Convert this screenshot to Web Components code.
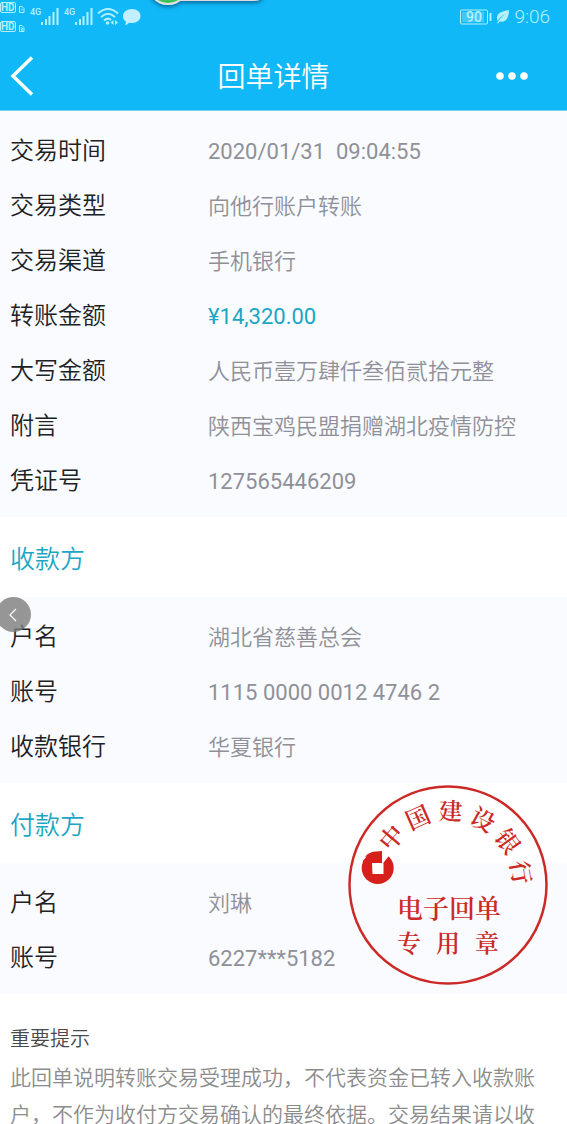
<!DOCTYPE html>
<html lang="zh-CN">
<head>
<meta charset="utf-8">
<meta name="viewport" content="width=device-width, initial-scale=1">
<title>回单详情</title>
<style>
  body {
    margin: 0;
    background: #fff;
    font-family: Roboto, "Noto Sans CJK SC", sans-serif;
    font-weight: 350;
  }
</style>
</head>
<body>
<receipt-page>
  <status-bar slot="header" time="9:06" battery="90"></status-bar>
  <nav-bar slot="header">回单详情</nav-bar>

  <receipt-panel>
    <receipt-row label="交易时间" numeric>2020/01/31  09:04:55</receipt-row>
    <receipt-row label="交易类型">向他行账户转账</receipt-row>
    <receipt-row label="交易渠道">手机银行</receipt-row>
    <receipt-row label="转账金额" numeric accent>¥14,320.00</receipt-row>
    <receipt-row label="大写金额">人民币壹万肆仟叁佰贰拾元整</receipt-row>
    <receipt-row label="附言">陕西宝鸡民盟捐赠湖北疫情防控</receipt-row>
    <receipt-row label="凭证号" numeric>127565446209</receipt-row>
  </receipt-panel>

  <receipt-panel heading="收款方">
    <receipt-row label="户名">湖北省慈善总会</receipt-row>
    <receipt-row label="账号" numeric>1115 0000 0012 4746 2</receipt-row>
    <receipt-row label="收款银行">华夏银行</receipt-row>
    <float-button slot="overlay"></float-button>
  </receipt-panel>

  <receipt-panel heading="付款方">
    <receipt-row label="户名">刘琳</receipt-row>
    <receipt-row label="账号" numeric>6227***5182</receipt-row>
    <bank-seal slot="overlay" bank="中国建设银行"></bank-seal>
  </receipt-panel>

  <receipt-notice heading="重要提示">此回单说明转账交易受理成功，不代表资金已转入收款账户，不作为收付方交易确认的最终依据。交易结果请以收</receipt-notice>
</receipt-page>

<script>
  class ReceiptPage extends HTMLElement {
    constructor() {
      super();

      this.attachShadow({ mode: 'open' });
      this.shadowRoot.innerHTML = `
        <style>
          :host {
            display: flex;
            flex-direction: column;
            height: 100vh;
            overflow: hidden;
          }
          header {
            position: relative;
            flex: none;
            background: #10b8f8;
            border-bottom: 1px solid #6fd3ec;
          }
          .bubble {
            position: absolute;
            top: 0;
            left: 140px;
          }
          main {
            flex: none;
          }
        </style>
        <header>
          <slot name="header"></slot>
          <svg class="bubble" width="136" height="14" viewBox="0 0 136 14" aria-hidden="true">
            <defs>
              <filter id="shade" x="-20%" y="-50%" width="140%" height="250%">
                <feDropShadow dx="0" dy="2" stdDeviation="2" flood-color="#024a78" flood-opacity="0.7"/>
              </filter>
            </defs>
            <g filter="url(#shade)">
              <path d="M28 -12H126Q124 1 114 1H28z" fill="#dcdcdc"/>
              <circle cx="28" cy="-16" r="21" fill="#e4e4e4"/>
            </g>
            <circle cx="28" cy="-16" r="19" fill="#3fc35a"/>
          </svg>
        </header>
        <main><slot></slot></main>
      `;
    }
  }

  class StatusBar extends HTMLElement {
    constructor() {
      super();

      this.attachShadow({ mode: 'open' });
      this.shadowRoot.innerHTML = `
        <style>
          :host {
            display: flex;
            justify-content: space-between;
            height: 34px;
            padding: 0 17px 8px 0;
            color: #b4f0fc;
          }
          svg {
            display: block;
            fill: currentColor;
          }
          .right {
            display: flex;
            align-items: center;
            gap: 3px;
          }
          time {
            font-size: 19px;
            line-height: 34px;
          }
          text {
            font-family: Roboto, sans-serif;
          }
        </style>
        <svg width="145" height="34" viewBox="0 0 145 34">
          <g fill="none" stroke="currentColor">
            <rect x="0.500" y="2.500" width="15" height="10" rx="1.500"/>
            <rect x="0.500" y="21.500" width="15" height="10" rx="1.500"/>
            <path d="M19.500 6.500v6h4.500v-4l-2 -2z M22 8.500v2"/>
            <path d="M19.500 25.500v6h4.500v-4l-2 -2z M21 28h1.500v1l-1.500 1h2"/>
          </g>
          <g font-size="10" font-weight="700">
            <text x="1" y="11">HD</text>
            <text x="1" y="30">HD</text>
          </g>
          <g font-size="9" font-weight="500">
            <text x="30" y="15">4G</text>
            <text x="64" y="15">4G</text>
          </g>
          <path id="bars" d="M41 22h2v3h-2z M45 19h2v6h-2z M48.500 16h2v9h-2z M52.500 12h2v13h-2z M56.500 8h2v17h-2z"/>
          <use href="#bars" x="34"/>
          <g fill="none" stroke="currentColor" stroke-width="2">
            <path d="M98 13.500Q108 4.500 118 13.500"/>
            <path d="M101 17Q108 10.500 115 17"/>
            <path d="M104 20.500Q108 17 111 20"/>
          </g>
          <circle cx="107.500" cy="23" r="1.800"/>
          <path d="M110.500 22.500l3-2.500v5z M118 22.500l-3-2.500v5z"/>
          <path d="M132 9c5 0 8.500 3 8.500 7s-3.500 7-8.500 7c-1 0-2-.1-3-.3-1 1.300-2 2-4 2.300.7-1 1-2 .8-3.500-1.800-1.200-2.800-3-2.800-5.500 0-4 4-7 9-7z" fill="#c2efff"/>
        </svg>
        <div class="right">
          <svg width="32" height="16" viewBox="0 0 32 16">
            <rect x="0.500" y="1" width="27" height="14" rx="1" fill="none" stroke="currentColor"/>
            <rect x="2" y="3" width="22" height="10" opacity="0.3"/>
            <path d="M29.500 4h2v8h-2z"/>
            <text id="level" x="6" y="13" font-size="14" font-weight="500"></text>
          </svg>
          <svg width="16" height="16" viewBox="0 0 16 16">
            <path d="M14 1C7 2 2 4 2 9c0 1 .2 2 .7 2.700C4.500 9 7 6.500 10 5 7 7.500 4 10.500 2 14l1.200.6L4.500 12.500C10.500 14 14 9 14 1z"/>
          </svg>
          <time></time>
        </div>
      `;
    }

    connectedCallback() {
      this.shadowRoot.querySelector('time').textContent = this.getAttribute('time');
      this.shadowRoot.querySelector('#level').textContent = this.getAttribute('battery');
    }
  }

  class NavBar extends HTMLElement {
    constructor() {
      super();

      this.attachShadow({ mode: 'open' });
      this.shadowRoot.innerHTML = `
        <style>
          :host {
            display: flex;
            align-items: center;
            height: 68px;
            color: #fff;
          }
          button {
            flex: none;
            width: 60px;
            height: 60px;
            padding: 0 10px;
            border: 0;
            background: none;
            color: inherit;
            text-align: left;
          }
          button.more {
            width: 80px;
            padding: 0 8px;
          }
          svg {
            display: block;
          }
          h1 {
            flex: 1;
            margin: 0;
            padding-top: 4px;
            font-size: 28px;
            font-weight: 350;
            line-height: 40px;
            text-align: center;
          }
        </style>
        <button type="button" aria-label="返回">
          <svg width="24" height="40" viewBox="0 0 24 40" fill="none" stroke="currentColor" stroke-width="3.500">
            <path d="M22 1.500L3 20L22 38.500"/>
          </svg>
        </button>
        <h1><slot></slot></h1>
        <button type="button" class="more" aria-label="更多">
          <svg width="34" height="10" viewBox="0 0 34 10" fill="currentColor">
            <circle cx="5" cy="5" r="3.800"/>
            <circle cx="17" cy="5" r="3.800"/>
            <circle cx="29" cy="5" r="3.800"/>
          </svg>
        </button>
      `;
    }
  }

  class ReceiptPanel extends HTMLElement {
    constructor() {
      super();

      this.attachShadow({ mode: 'open' });
      this.shadowRoot.innerHTML = `
        <style>
          :host {
            display: block;
          }
          h2 {
            margin: 0;
            padding: 6px 10px 0;
            color: #1ba6c4;
            font-size: 25px;
            font-weight: 350;
            line-height: 74px;
          }
          h2[hidden] {
            display: none;
          }
          .body {
            position: relative;
            padding: 13px 10px 8px;
            background: #f9fbff;
          }
        </style>
        <h2 hidden></h2>
        <div class="body">
          <slot></slot>
          <slot name="overlay"></slot>
        </div>
      `;
    }

    connectedCallback() {
      const heading = this.getAttribute('heading');
      if (heading) {
        const h2 = this.shadowRoot.querySelector('h2');
        h2.textContent = heading;
        h2.hidden = false;
      }
    }
  }

  class ReceiptRow extends HTMLElement {
    constructor() {
      super();

      this.attachShadow({ mode: 'open' });
      this.shadowRoot.innerHTML = `
        <style>
          :host {
            display: block;
            color: #8f9098;
          }
          :host([accent]) {
            color: #1ba6c4;
          }
          dl {
            display: grid;
            grid-template-columns: 198px 1fr;
            align-items: center;
            margin: 0;
            line-height: 55px;
          }
          dt {
            color: #202124;
            font-size: 24px;
          }
          dd {
            margin: 0;
            font-size: 22px;
            white-space: pre;
          }
          :host([numeric]) dd {
            font-weight: 400;
          }
        </style>
        <dl>
          <dt></dt>
          <dd><slot></slot></dd>
        </dl>
      `;
    }

    connectedCallback() {
      this.shadowRoot.querySelector('dt').textContent = this.getAttribute('label');
    }
  }

  class FloatButton extends HTMLElement {
    constructor() {
      super();

      this.attachShadow({ mode: 'open' });
      this.shadowRoot.innerHTML = `
        <style>
          :host {
            position: absolute;
            top: 0;
            left: -4px;
          }
          button {
            display: grid;
            place-items: center;
            width: 35px;
            height: 35px;
            padding: 0;
            border: 0;
            border-radius: 50%;
            background: rgba(125, 125, 125, 0.8);
          }
        </style>
        <button type="button" aria-label="展开">
          <svg width="10" height="16" viewBox="0 0 10 16" fill="none" stroke="#fff" stroke-width="1.200">
            <path d="M7 2L1 8L7 14"/>
          </svg>
        </button>
      `;
    }
  }

  class BankSeal extends HTMLElement {
    constructor() {
      super();

      this.attachShadow({ mode: 'open' });
      this.shadowRoot.innerHTML = `
        <style>
          :host {
            position: absolute;
            top: -78px;
            right: 19px;
          }
          svg {
            display: block;
          }
          text {
            font-family: "Noto Serif CJK SC", "Noto Sans CJK SC", sans-serif;
            font-weight: 600;
            fill: #cb2a26;
          }
        </style>
        <svg width="200" height="200" viewBox="0 0 200 200">
          <circle cx="100" cy="100" r="98.500" fill="none" stroke="#cb2a26" stroke-width="2.500"/>
          <text class="arc" font-size="24"></text>
          <text x="49" y="133" font-size="26">电子回单</text>
          <text x="49 88 127" y="167" font-size="24">专用章</text>
          <circle cx="29.700" cy="83" r="16" fill="#d7201c"/>
          <path d="M12 64H47L40 72L34 79.500V64z" fill="#fff"/>
          <path d="M17 72Q21 66.500 28 66.500L34 66V70Q25 70 17 72z" fill="#d7201c"/>
          <path d="M15 75.500Q23 71.500 34 71.500V79H15z" fill="#d7201c"/>
          <path d="M24 78h11.500v11h-11z" fill="#fff"/>
        </svg>
      `;
    }

    connectedCallback() {
      // Spread the bank name along the rim, each character turned to face outwards
      const chars = [...this.getAttribute('bank')];
      const radius = 74;
      const start = -50;
      const step = 26;
      const xs = [];
      const ys = [];
      const turns = [];

      chars.forEach((char, i) => {
        const deg = start + i * step;
        const a = deg * Math.PI / 180;
        const cx = 100 + radius * Math.sin(a);
        const cy = 100 - radius * Math.cos(a);
        // from the middle of the glyph back to its baseline origin
        xs.push(cx - 12 * Math.cos(a) - 9 * Math.sin(a));
        ys.push(cy - 12 * Math.sin(a) + 9 * Math.cos(a));
        turns.push(deg);
      });

      const text = this.shadowRoot.querySelector('.arc');
      text.setAttribute('x', xs.join(' '));
      text.setAttribute('y', ys.join(' '));
      text.setAttribute('rotate', turns.join(' '));
      text.textContent = chars.join('');
    }
  }

  class ReceiptNotice extends HTMLElement {
    constructor() {
      super();

      this.attachShadow({ mode: 'open' });
      this.shadowRoot.innerHTML = `
        <style>
          :host {
            display: block;
            padding: 24px 20px 0 10px;
          }
          h3 {
            margin: 0;
            color: #4a4a4a;
            font-size: 20px;
            font-weight: 350;
            line-height: 42px;
          }
          p {
            margin: 0;
            color: #8c8c8c;
            font-size: 21px;
            line-height: 37px;
          }
        </style>
        <h3></h3>
        <p><slot></slot></p>
      `;
    }

    connectedCallback() {
      this.shadowRoot.querySelector('h3').textContent = this.getAttribute('heading');
    }
  }

  customElements.define('receipt-page', ReceiptPage);
  customElements.define('status-bar', StatusBar);
  customElements.define('nav-bar', NavBar);
  customElements.define('receipt-panel', ReceiptPanel);
  customElements.define('receipt-row', ReceiptRow);
  customElements.define('float-button', FloatButton);
  customElements.define('bank-seal', BankSeal);
  customElements.define('receipt-notice', ReceiptNotice);
</script>
</body>
</html>
